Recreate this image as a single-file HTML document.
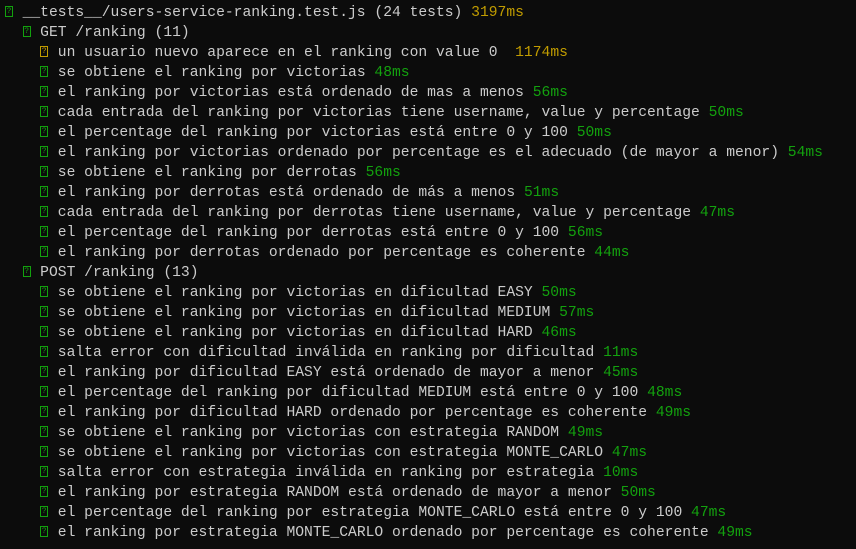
<!DOCTYPE html>
<html><head><meta charset="utf-8"><style>
html,body{margin:0;padding:0;background:#0c0c0c;width:856px;height:549px;overflow:hidden}
pre{margin:0;padding:3px 0 0 5px;font-family:"Liberation Mono",monospace;font-size:14.67px;line-height:20px;color:#cccccc;white-space:pre}
.g{color:#13a10e}.y{color:#c19c00}
.i{display:inline-block;width:8px;height:11px;border:1px solid currentColor;box-sizing:border-box;vertical-align:-1px;margin-right:0.8px;font-size:8px;line-height:9px;text-align:center;overflow:hidden}
</style></head><body><pre><span class="i g">?</span> __tests__/users-service-ranking.test.js (24 tests) <span class="y">3197ms</span>
  <span class="i g">?</span> GET /ranking (11)
    <span class="i y">?</span> un usuario nuevo aparece en el ranking con value 0  <span class="y">1174ms</span>
    <span class="i g">?</span> se obtiene el ranking por victorias <span class="g">48ms</span>
    <span class="i g">?</span> el ranking por victorias está ordenado de mas a menos <span class="g">56ms</span>
    <span class="i g">?</span> cada entrada del ranking por victorias tiene username, value y percentage <span class="g">50ms</span>
    <span class="i g">?</span> el percentage del ranking por victorias está entre 0 y 100 <span class="g">50ms</span>
    <span class="i g">?</span> el ranking por victorias ordenado por percentage es el adecuado (de mayor a menor) <span class="g">54ms</span>
    <span class="i g">?</span> se obtiene el ranking por derrotas <span class="g">56ms</span>
    <span class="i g">?</span> el ranking por derrotas está ordenado de más a menos <span class="g">51ms</span>
    <span class="i g">?</span> cada entrada del ranking por derrotas tiene username, value y percentage <span class="g">47ms</span>
    <span class="i g">?</span> el percentage del ranking por derrotas está entre 0 y 100 <span class="g">56ms</span>
    <span class="i g">?</span> el ranking por derrotas ordenado por percentage es coherente <span class="g">44ms</span>
  <span class="i g">?</span> POST /ranking (13)
    <span class="i g">?</span> se obtiene el ranking por victorias en dificultad EASY <span class="g">50ms</span>
    <span class="i g">?</span> se obtiene el ranking por victorias en dificultad MEDIUM <span class="g">57ms</span>
    <span class="i g">?</span> se obtiene el ranking por victorias en dificultad HARD <span class="g">46ms</span>
    <span class="i g">?</span> salta error con dificultad inválida en ranking por dificultad <span class="g">11ms</span>
    <span class="i g">?</span> el ranking por dificultad EASY está ordenado de mayor a menor <span class="g">45ms</span>
    <span class="i g">?</span> el percentage del ranking por dificultad MEDIUM está entre 0 y 100 <span class="g">48ms</span>
    <span class="i g">?</span> el ranking por dificultad HARD ordenado por percentage es coherente <span class="g">49ms</span>
    <span class="i g">?</span> se obtiene el ranking por victorias con estrategia RANDOM <span class="g">49ms</span>
    <span class="i g">?</span> se obtiene el ranking por victorias con estrategia MONTE_CARLO <span class="g">47ms</span>
    <span class="i g">?</span> salta error con estrategia inválida en ranking por estrategia <span class="g">10ms</span>
    <span class="i g">?</span> el ranking por estrategia RANDOM está ordenado de mayor a menor <span class="g">50ms</span>
    <span class="i g">?</span> el percentage del ranking por estrategia MONTE_CARLO está entre 0 y 100 <span class="g">47ms</span>
    <span class="i g">?</span> el ranking por estrategia MONTE_CARLO ordenado por percentage es coherente <span class="g">49ms</span></pre></body></html>
